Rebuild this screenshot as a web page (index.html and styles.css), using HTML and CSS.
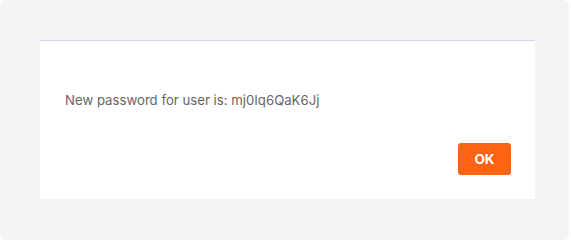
FILE: index.html
```html
<!DOCTYPE html>
<html lang="en">
<head>
  <meta charset="UTF-8">
  <meta name="viewport" content="width=device-width, initial-scale=1.0">
  <title>Password reset</title>
  <link rel="stylesheet" href="styles.css">
</head>
<body>

  <div class="backdrop">
    <!-- Dialog -->
    <div class="dialog">
      <p class="dialog-text">New password for user is: mj0Iq6QaK6Jj</p>
      <div class="dialog-actions">
        <button class="ok-btn">OK</button>
      </div>
    </div>
  </div>

</body>
</html>
```

FILE: styles.css
```css
body {
  margin: 0;
  background: #ffffff;
  font-family: 'Inter', 'Noto Sans', sans-serif;
}

.backdrop {
  width: 569px;
  height: 240px;
  background: #f4f4f5;
  border-radius: 6px;
  padding: 40px 34px 41px 40px;
  box-sizing: border-box;
}

.dialog {
  background: #ffffff;
  border-top: 1px solid #d3d5f0;
  height: 159px;
  box-sizing: border-box;
  padding: 50px 24px 0 25px;
}

.dialog-text {
  margin: 0;
  font-size: 13.2px;
  line-height: 18px;
  color: #666666;
}

.dialog-actions {
  display: flex;
  justify-content: flex-end;
  margin-top: 34px;
}

.ok-btn {
  width: 53px;
  height: 32px;
  border: none;
  border-radius: 3px;
  background: #ff6314;
  color: #ffffff;
  font-family: 'Inter', 'Noto Sans', sans-serif;
  font-size: 13.5px;
  font-weight: 700;
  cursor: pointer;
}
```
